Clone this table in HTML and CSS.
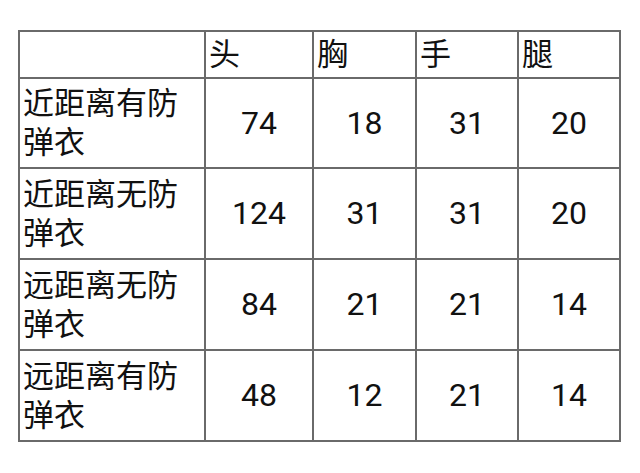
FILE: index.html
```html
<!DOCTYPE html>
<html lang="zh">
<head>
<meta charset="utf-8">
<link rel="stylesheet" href="styles.css">
</head>
<body>
<table class="grid">
  <colgroup>
    <col class="c1"><col class="c2"><col class="c3"><col class="c4"><col class="c5">
  </colgroup>
  <tr class="head">
    <td class="label"></td><td class="label">头</td><td class="label">胸</td><td class="label">手</td><td class="label">腿</td>
  </tr>
  <tr class="row r2">
    <td class="label">近距离有防弹衣</td><td class="num">74</td><td class="num">18</td><td class="num">31</td><td class="num">20</td>
  </tr>
  <tr class="row">
    <td class="label">近距离无防弹衣</td><td class="num">124</td><td class="num">31</td><td class="num">31</td><td class="num">20</td>
  </tr>
  <tr class="row">
    <td class="label">远距离无防弹衣</td><td class="num">84</td><td class="num">21</td><td class="num">21</td><td class="num">14</td>
  </tr>
  <tr class="row">
    <td class="label">远距离有防弹衣</td><td class="num">48</td><td class="num">12</td><td class="num">21</td><td class="num">14</td>
  </tr>
</table>
</body>
</html>
```
FILE: styles.css
```css
html, body {
  margin: 0;
  padding: 0;
  background: #ffffff;
}
body {
  font-family: Roboto, "Noto Sans CJK SC", sans-serif;
  color: #111111;
}
.grid {
  margin: 30px 0 0 18px;
  border-collapse: separate;
  border-spacing: 0;
  table-layout: fixed;
  width: 603px;
  border-top: 2px solid #6a6a6a;
  border-left: 2px solid #6a6a6a;
}
.c1 { width: 186px; }
.c2 { width: 108px; }
.c3 { width: 103px; }
.c4 { width: 102px; }
.c5 { width: 102px; }
.grid td {
  box-sizing: border-box;
  border-right: 2px solid #6a6a6a;
  border-bottom: 2px solid #6a6a6a;
  padding: 0;
  font-size: 31px;
  line-height: 39px;
  vertical-align: middle;
}
.head td { height: 47px; }
.row td { height: 91px; }
.r2 td { height: 90px; }
.label {
  text-align: left;
  padding-left: 3px !important;
  padding-right: 6px !important;
}
.num {
  text-align: center;
  font-size: 32px !important;
}
```
